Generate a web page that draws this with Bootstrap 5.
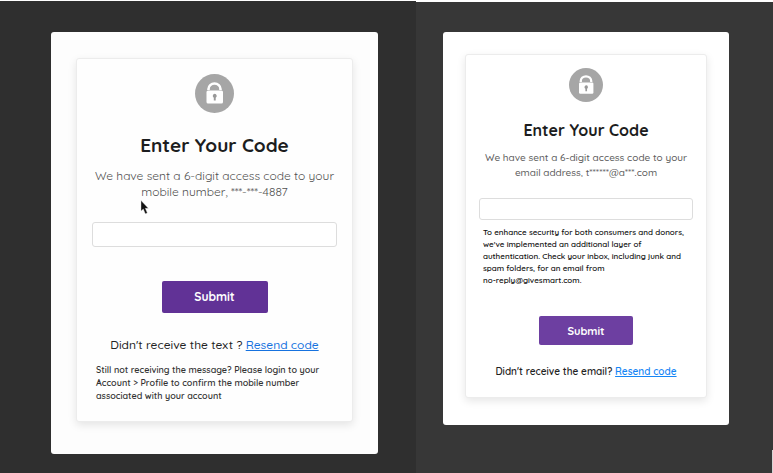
<!DOCTYPE html>
<html lang="en">
<head>
<meta charset="utf-8">
<meta name="viewport" content="width=device-width, initial-scale=1">
<title>Enter Your Code</title>
<link href="https://cdn.jsdelivr.net/npm/bootstrap@5.3.0/dist/css/bootstrap.min.css" rel="stylesheet">
<style>
body{font-family:Quicksand,Lato,sans-serif;background:#fff;color:#2b2b2b}
.split{display:grid;grid-template-columns:minmax(0,416fr) minmax(0,357fr);min-height:100vh}
.pane{margin-top:1px;padding:31px 38px 18px 51px;background:#2f2f2f}
.pane-mail{margin-top:2px;padding:30px 44px 18px 27px;background:#373737}
.pane-mail::after{content:"";position:absolute;right:0;bottom:0;width:1px;height:23px;background:#d5d5d5}
.sheet{background:#fdfdfd;border-radius:3px;padding:26px 25px 32px}
.pane-mail .sheet{background:#fff;padding:22px 22px 27px}
.code-card{border:1px solid #ececec;border-radius:3px;background:#fefefe;box-shadow:0 3px 8px rgba(0,0,0,.1);padding:15px 15px 18px}
.pane-mail .code-card{background:#fff;padding:13px 13px 16px}
.lock{width:39px;height:39px;margin-bottom:20px}
.pane-mail .lock{width:34px;height:34px;margin-bottom:18px}
h1{font-size:19px;line-height:24px;font-weight:700;color:#1c1d20;margin-bottom:11px}
.pane-mail h1{font-size:16px;line-height:20px;margin-bottom:10px}
.intro{font-size:12px;line-height:16px;font-weight:400;color:#505050;margin-bottom:22px}
.pane-mail .intro{font-size:10px;line-height:15px;font-weight:500;color:#5c5c5c;margin-bottom:18px}
.code-input{height:25px;border:1px solid #ddd;border-radius:3px;padding:2px 8px;font-size:13px;background:#fff}
.pane-mail .code-input{height:22px;font-size:12px}
.submit{width:106px;height:32px;padding:0;border:0;border-radius:2px;background:#613296;color:#fff;font-size:12px;line-height:20px;font-weight:700;margin-top:34px}
.pane-mail .submit{width:94px;height:29px;background:#6d3fa1;font-size:11px;margin-top:30px}
.submit:hover{background:#54288a;color:#fff}
.resend{font-size:12px;line-height:18px;font-weight:500;margin:23px 0 9px;color:#222}
.pane-mail .resend{font-size:10px;font-weight:600;margin:18px 0 0}
.resend a{color:#1672df}
.pane-mail .resend a{color:#1686f5}
.hint{font-size:9px;line-height:13px;font-weight:600;margin:0 4px 1px;color:#333}
.pane-mail .hint{font-size:8px;line-height:12px;margin:6px 4px 0;color:#111}
.intro,.resend,.hint{white-space:nowrap}
.pointer{position:absolute;left:140px;top:199px;width:9px;height:15px}
</style>
<script src="https://cdn.jsdelivr.net/npm/bootstrap@5.3.0/dist/js/bootstrap.bundle.min.js"></script>
</head>
<body>
<svg class="d-none" aria-hidden="true"><symbol id="lock" viewBox="0 0 39 39">
<circle cx="19.500" cy="19.500" r="19.500" fill="#a6a6a6"/>
<path d="M13.500 16v-1a6 5.500 0 0 1 12 0v1" fill="none" stroke="#fff" stroke-width="2.600"/>
<rect x="11.500" y="16.500" width="16.500" height="13" rx="1.500" fill="#fff"/>
<path d="M19.700 19.800a2.100 2.100 0 0 1 1 3.900v2.900h-1.900v-2.900a2.100 2.100 0 0 1 .9-3.900z" fill="#999"/>
</symbol></svg>
<main class="split">
<section class="pane position-relative">
 <div class="sheet"><form class="code-card text-center">
  <svg class="lock d-block mx-auto" aria-hidden="true"><use href="#lock"/></svg>
  <h1>Enter Your Code</h1>
  <p class="intro"><label for="phone-code">We have sent a 6-digit access code to your<br>mobile number, ***-***-4887</label></p>
  <input class="form-control code-input" id="phone-code" type="text" inputmode="numeric">
  <button class="btn submit" type="button">Submit</button>
  <p class="resend">Didn't receive the text ? <a href="#">Resend code</a></p>
  <p class="hint text-start">Still not receiving the message? Please login to your<br>Account &gt; Profile to confirm the mobile number<br>associated with your account</p>
 </form></div>
 <svg class="pointer" viewBox="0 0 9 15" aria-hidden="true"><path d="M1 .5V11l2.300-2 2 4.800 2-.9-2-4.600h3z" fill="#111" stroke="#ddd" stroke-width=".4"/></svg>
</section>
<section class="pane pane-mail position-relative">
 <div class="sheet"><form class="code-card text-center">
  <svg class="lock d-block mx-auto" aria-hidden="true"><use href="#lock"/></svg>
  <h1>Enter Your Code</h1>
  <p class="intro"><label for="mail-code">We have sent a 6-digit access code to your<br>email address, t******@a***.com</label></p>
  <input class="form-control code-input" id="mail-code" type="text" inputmode="numeric">
  <p class="hint text-start">To enhance security for both consumers and donors,<br>we've implemented an additional layer of<br>authentication. Check your inbox, including junk and<br>spam folders, for an email from<br>no-reply@givesmart.com.</p>
  <button class="btn submit" type="button">Submit</button>
  <p class="resend">Didn't receive the email? <a href="#">Resend code</a></p>
 </form></div>
</section>
</main>
</body>
</html>
